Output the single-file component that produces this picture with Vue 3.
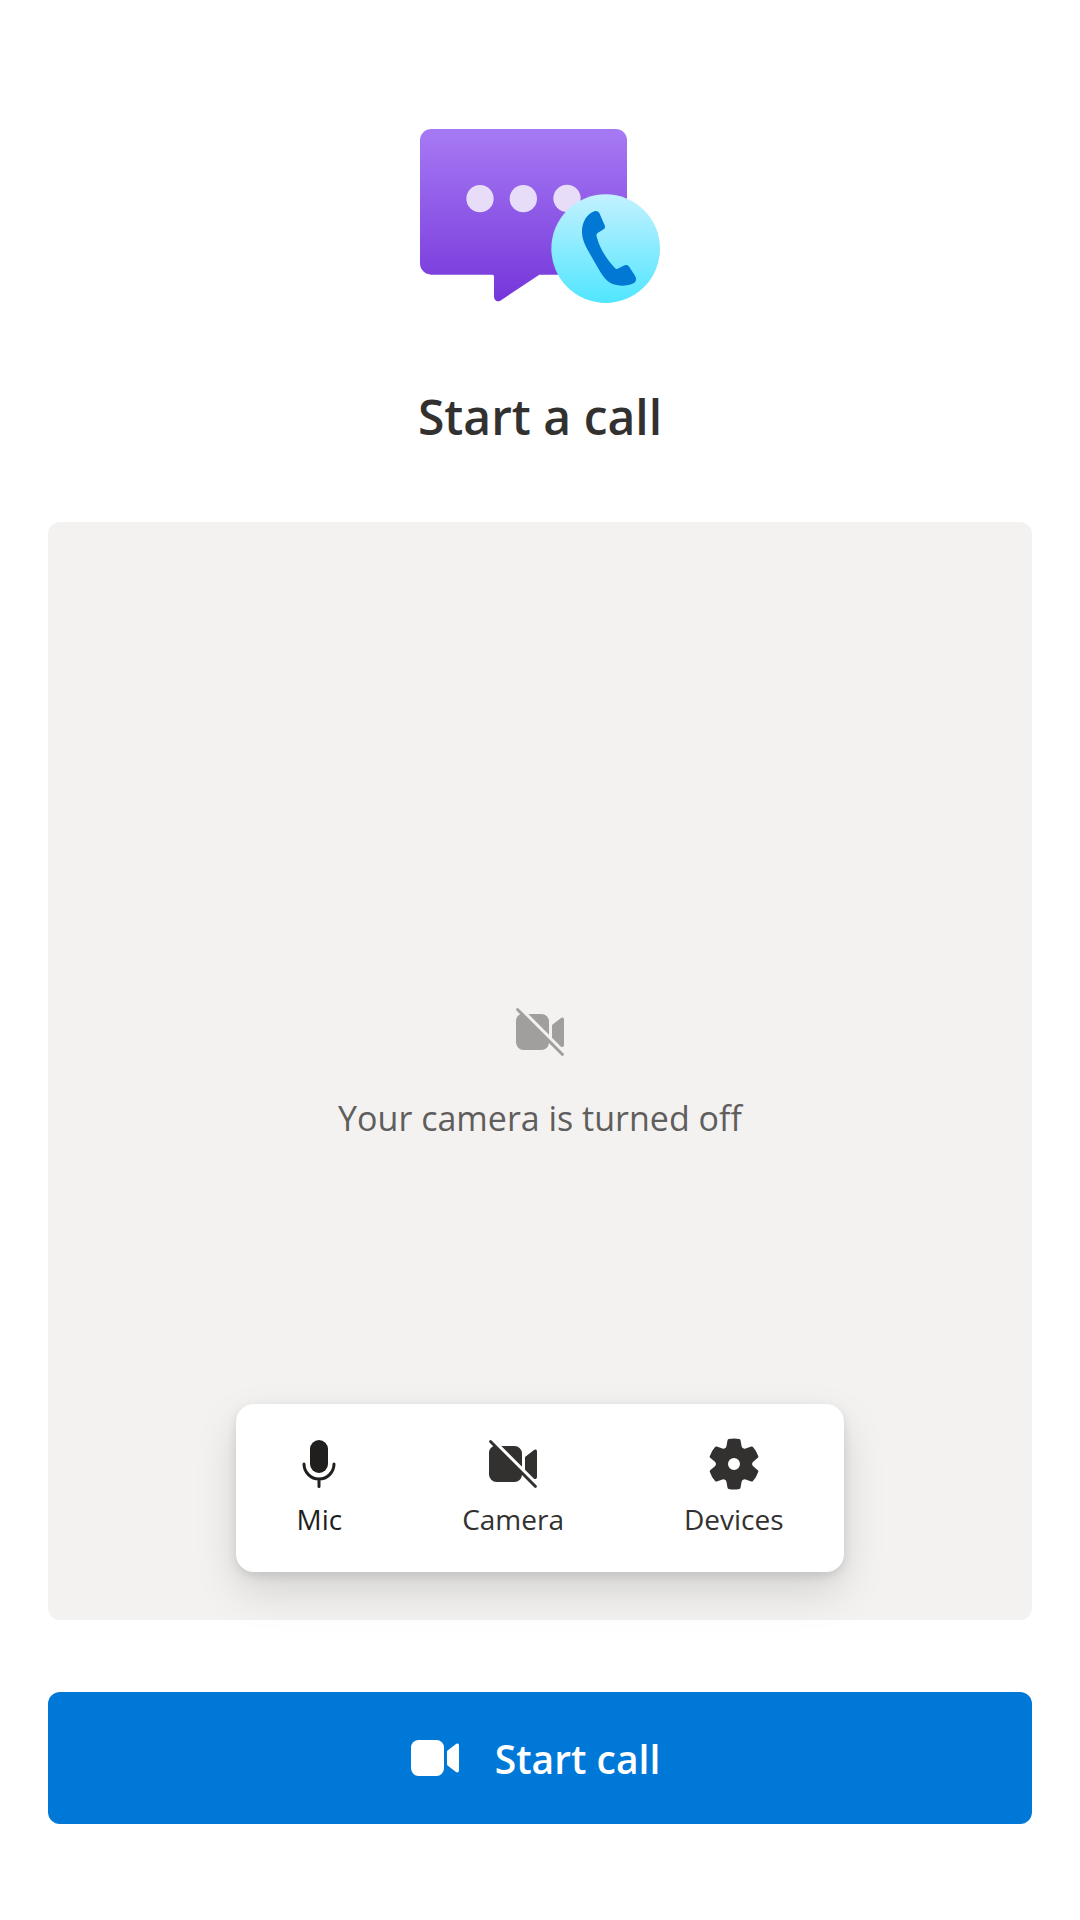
<script setup>
const controls = [
  { id: 'mic', label: 'Mic' },
  { id: 'camera', label: 'Camera' },
  { id: 'devices', label: 'Devices' },
]
</script>

<template>
  <main class="page">
    <header class="intro">
      <svg class="logo" viewBox="0 0 720 522" aria-hidden="true">
        <defs>
          <linearGradient id="bubble" x1="0" y1="0" x2="0" y2="1">
            <stop offset="0" stop-color="#a67af4" />
            <stop offset="1" stop-color="#7636da" />
          </linearGradient>
          <linearGradient id="badge" x1="0" y1="0" x2="0" y2="1">
            <stop offset="0" stop-color="#c3f1ff" />
            <stop offset="1" stop-color="#50e6ff" />
          </linearGradient>
        </defs>
        <path
          fill="url(#bubble)"
          d="M34 0H587A34 34 0 0 1 621 34V403A34 34 0 0 1 587 437H358L241 515Q234 519 228 515Q222 511 222 504V442Q222 437 217 437H34A34 34 0 0 1 0 403V34A34 34 0 0 1 34 0Z"
        />
        <g fill="#e8ddf9">
          <circle cx="180" cy="209" r="41" />
          <circle cx="310" cy="209" r="41" />
          <circle cx="441" cy="208" r="41" />
        </g>
        <circle cx="557" cy="359" r="163" fill="url(#badge)" />
        <path
          fill="#0078d4"
          d="M525 246C532 245 536 248 539 254L554 289C556 294 555 298 551 301L534 311C530 314 528 318 530 323C537 352 559 391 584 416C587 420 591 421 596 418L609 411C617 407 623 407 628 414L645 440C650 448 649 457 642 462C624 471 602 473 580 466C561 459 549 443 538 424L507 370C493 345 486 327 486 307C486 280 500 254 525 246Z"
        />
      </svg>
      <h1 class="title">Start a call</h1>
    </header>

    <section class="preview" aria-label="Camera preview">
      <div class="placeholder">
        <svg class="icon muted" viewBox="0 0 20 20" aria-hidden="true">
          <path d="M6.1 4H10.5A2.5 2.5 0 0 1 13 6.5V10.9Z" />
          <path d="M14 7.9Q14 7.7 14.2 7.5L16.9 5.4C17.4 5 18 5.2 18 5.8V14.3C18 14.9 17.4 15.3 16.9 14.8L14 11.9Z" />
          <path d="M3.4 4.1L2.15 2.85A.5.5 0 0 1 2.85 2.15L17.85 17.15A.5.5 0 0 1 17.15 17.85L13 13.7A2.5 2.5 0 0 1 10.5 16H4.5A2.5 2.5 0 0 1 2 13.5V6.5A2.5 2.5 0 0 1 3.4 4.1Z" />
        </svg>
        <p class="status">Your camera is turned off</p>
      </div>

      <div class="toolbar" role="toolbar" aria-label="Call controls">
        <button
          v-for="control in controls"
          :key="control.id"
          type="button"
          class="control"
          :class="control.id"
        >
          <svg v-if="control.id === 'mic'" class="icon" viewBox="0 0 20 20" aria-hidden="true">
            <rect x="7" y="2" width="6" height="11" rx="3" />
            <path class="line" d="M5 10a5 5 0 0 0 10 0M10 15v2.5" />
          </svg>
          <svg v-else-if="control.id === 'camera'" class="icon" viewBox="0 0 20 20" aria-hidden="true">
            <path d="M6.1 4H10.5A2.5 2.5 0 0 1 13 6.5V10.9Z" />
            <path d="M14 7.9Q14 7.7 14.2 7.5L16.9 5.4C17.4 5 18 5.2 18 5.8V14.3C18 14.9 17.4 15.3 16.9 14.8L14 11.9Z" />
            <path d="M3.4 4.1L2.15 2.85A.5.5 0 0 1 2.85 2.15L17.85 17.15A.5.5 0 0 1 17.15 17.85L13 13.7A2.5 2.5 0 0 1 10.5 16H4.5A2.5 2.5 0 0 1 2 13.5V6.5A2.5 2.5 0 0 1 3.4 4.1Z" />
          </svg>
          <svg v-else class="icon" viewBox="0 0 20 20" aria-hidden="true">
            <path d="M1.91 7.38A8.5 8.5 0 0 1 3.7 4.3a.5.5 0 0 1 .54-.13l1.92.68a1 1 0 0 0 1.32-.76l.36-2a.5.5 0 0 1 .4-.4 8.53 8.53 0 0 1 3.55 0c.2.04.35.2.38.4l.37 2a1 1 0 0 0 1.32.76l1.92-.68a.5.5 0 0 1 .54.13 8.5 8.5 0 0 1 1.78 3.08c.06.2 0 .4-.15.54l-1.56 1.32a1 1 0 0 0 0 1.52l1.56 1.32a.5.5 0 0 1 .15.54 8.5 8.5 0 0 1-1.78 3.08.5.5 0 0 1-.54.13l-1.92-.68a1 1 0 0 0-1.32.76l-.37 2a.5.5 0 0 1-.38.4 8.53 8.53 0 0 1-3.56 0 .5.5 0 0 1-.39-.4l-.36-2a1 1 0 0 0-1.32-.76l-1.92.68a.5.5 0 0 1-.54-.13 8.5 8.5 0 0 1-1.78-3.08.5.5 0 0 1 .15-.54l1.56-1.32a1 1 0 0 0 0-1.52L2.06 7.92a.5.5 0 0 1-.15-.54ZM8 10a2 2 0 1 0 4 0 2 2 0 0 0-4 0Z" />
          </svg>
          <span>{{ control.label }}</span>
        </button>
      </div>
    </section>

    <button type="button" class="start">
      <svg class="icon" viewBox="0 0 20 20" aria-hidden="true">
        <rect x="2" y="4" width="11" height="12" rx="2.5" />
        <path d="M14 7.9Q14 7.7 14.2 7.5L16.9 5.4C17.4 5 18 5.2 18 5.8V14.2C18 14.8 17.4 15 16.9 14.6L14.2 12.5Q14 12.3 14 12.1Z" />
      </svg>
      <span>Start call</span>
    </button>
  </main>
</template>

<style>
body {
  margin: 0;
  background: #fff;
}
</style>

<style scoped>
.page {
  box-sizing: border-box;
  display: flex;
  flex-direction: column;
  min-height: 100vh;
  padding: 129px 48px 96px;
  font-family: "Segoe UI", "Open Sans", "Noto Sans", sans-serif;
  color: #323130;
}

.intro {
  display: flex;
  flex-direction: column;
  align-items: center;
  gap: 81px;
}

.logo {
  width: 240px;
  height: 174px;
}

.title {
  margin: 0;
  font-size: 48px;
  line-height: 66px;
  font-weight: 600;
}

.preview {
  flex: 1;
  display: flex;
  flex-direction: column;
  align-items: center;
  margin: 72px 0;
  padding-bottom: 48px;
  border-radius: 12px;
  background: #f3f2f1;
}

.placeholder {
  flex: 1;
  display: flex;
  flex-direction: column;
  align-items: center;
  justify-content: center;
  gap: 32px;
  padding-top: 217px;
}

.icon {
  display: block;
  flex: none;
  width: 60px;
  height: 60px;
  fill: currentColor;
}

.line {
  fill: none;
  stroke: currentColor;
  stroke-width: 1;
  stroke-linecap: round;
}

.muted {
  color: #a19f9d;
}

.status {
  margin: 0;
  font-size: 34px;
  line-height: 48px;
  color: #605e5c;
}

.toolbar {
  display: flex;
  border-radius: 18px;
  background: #fff;
  box-shadow: 0 19px 43px rgba(0, 0, 0, 0.13), 0 4px 11px rgba(0, 0, 0, 0.11);
}

.control {
  display: flex;
  flex-direction: column;
  align-items: center;
  height: 168px;
  padding: 30px 60px 0;
  border: 0;
  background: none;
  font: inherit;
  font-size: 28px;
  line-height: 50px;
  color: #323130;
}

.control .icon {
  margin: 0 -12px;
}

.control.mic {
  color: #201f1e;
}

.start {
  display: flex;
  align-items: center;
  justify-content: center;
  gap: 30px;
  height: 132px;
  padding: 0 15px 0 0;
  border: 0;
  border-radius: 12px;
  background: #0078d7;
  color: #fff;
  font: inherit;
  font-size: 39px;
  font-weight: 600;
}
</style>
